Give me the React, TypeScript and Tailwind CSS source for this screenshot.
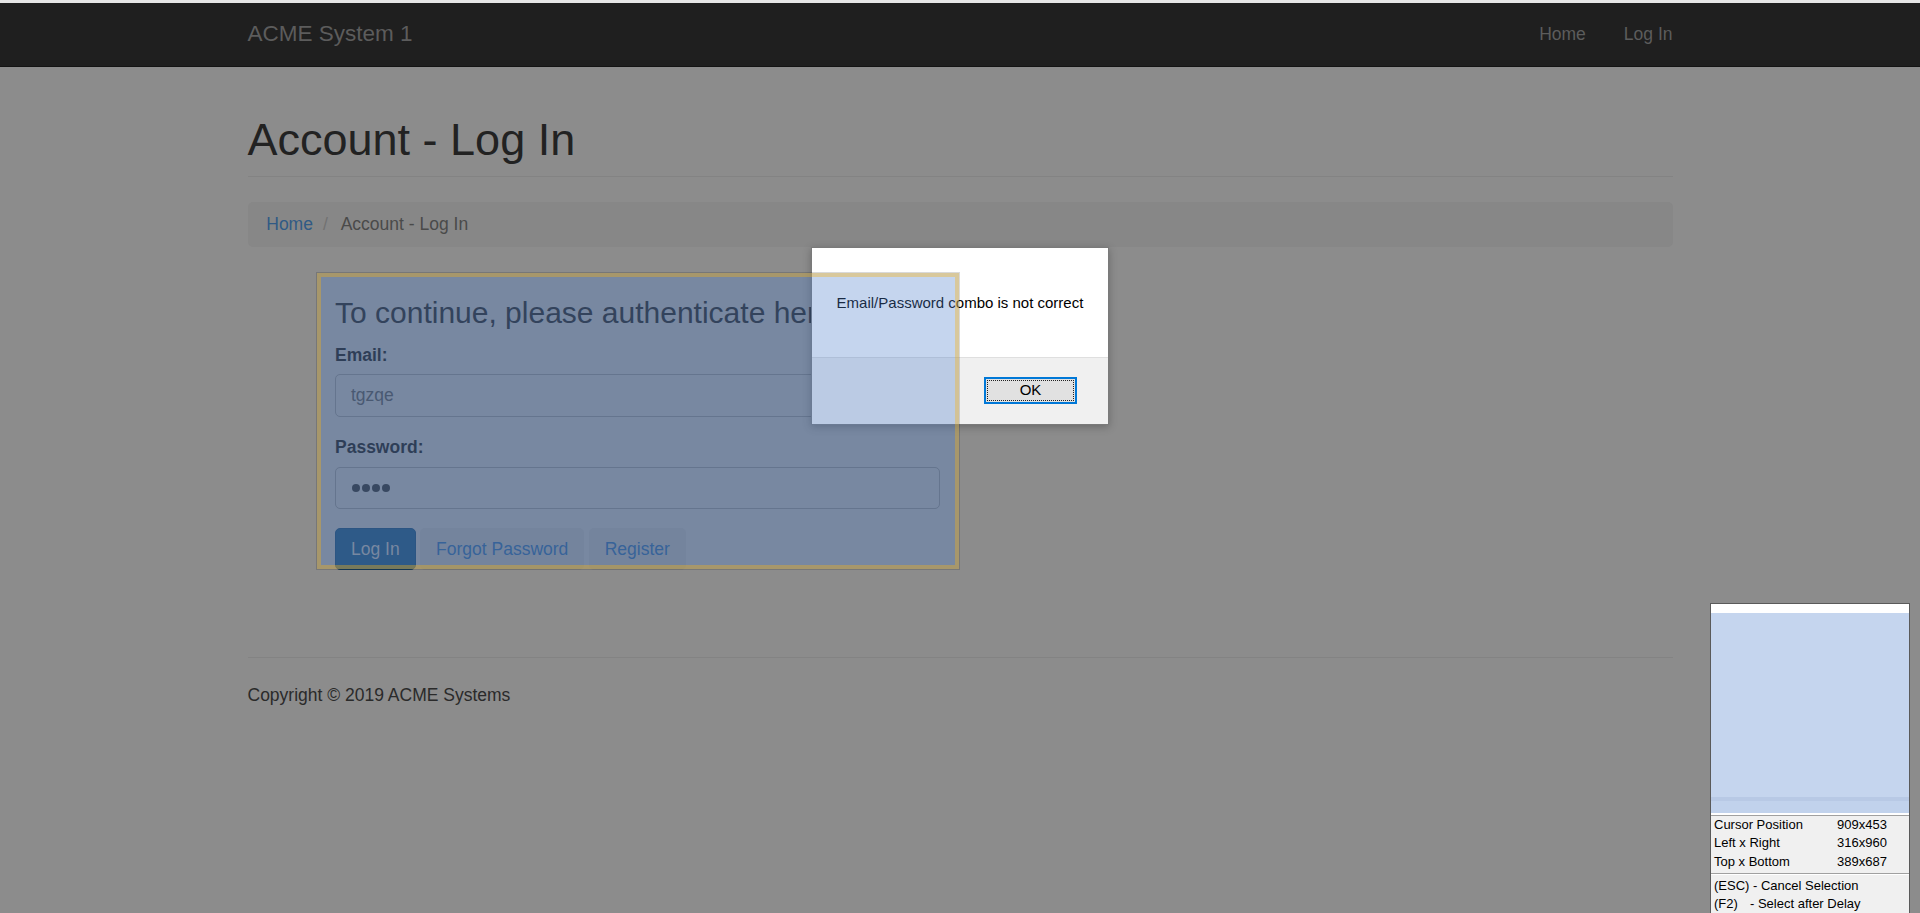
import React from "react";

export default function App() {
  return (
    <div className="relative w-[1920px] h-[913px] overflow-hidden bg-[#8c8c8c] font-['Liberation_Sans',Arial,sans-serif]">
      <div className="h-[3px] bg-[#e6e6e6]" />
      <nav className="h-[64px] bg-[#1f1f1f] border-b border-[#141414]">
        <div className="mx-auto w-[1425px] h-full flex items-center justify-between">
          <span className="text-[22.5px] leading-none text-[#5c5c5c]">ACME System 1</span>
          <div className="flex gap-[38px] text-[17.5px] leading-none text-[#5c5c5c]">
            <span>Home</span>
            <span>Log In</span>
          </div>
        </div>
      </nav>

      <div className="mx-auto w-[1425px]">
        <div className="mt-[47.7px] pb-[11.8px] border-b border-[#838383]">
          <h1 className="text-[45px] leading-[49.5px] text-[#222222]">Account - Log In</h1>
        </div>

        <div className="mt-[25px] h-[45px] rounded-[5px] bg-[#878787] px-[18.75px] flex items-center text-[17.5px] leading-[25px]">
          <span className="text-[#305a85]">Home</span>
          <span className="pl-[10px] pr-[8px] text-[#727272]">/{"\u00a0"}</span>
          <span className="text-[#4a4a4a]">Account - Log In</span>
        </div>

        <div className="mt-[49.5px] ml-[87.5px] w-[605px]">
          <h3 className="text-[30px] leading-[33px] text-[#262626] whitespace-nowrap">
            To continue, please authenticate here
          </h3>
          <div className="mt-[13.5px] text-[17.5px] leading-[25px] font-bold text-[#1e1e1e]">Email:</div>
          <div className="mt-[6.25px] h-[42.5px] rounded-[5px] border border-[#707070] bg-[#8c8c8c] px-[15px] flex items-center text-[17.5px] text-[#474747]">
            tgzqe
          </div>
          <div className="mt-[18.75px] text-[17.5px] leading-[25px] font-bold text-[#1e1e1e]">Password:</div>
          <div className="mt-[6.25px] h-[42.5px] rounded-[5px] border border-[#707070] bg-[#8c8c8c] pl-[16px] flex items-center gap-[2.5px]">
            <span className="w-[7.5px] h-[7.5px] rounded-full bg-[#2e2e2e]" />
            <span className="w-[7.5px] h-[7.5px] rounded-full bg-[#2e2e2e]" />
            <span className="w-[7.5px] h-[7.5px] rounded-full bg-[#2e2e2e]" />
            <span className="w-[7.5px] h-[7.5px] rounded-full bg-[#2e2e2e]" />
          </div>
          <div className="mt-[18.75px] flex gap-[4.4px] text-[17.5px]">
            <div className="h-[42.5px] px-[15px] rounded-[5px] border border-[#1b4060] bg-[#1e4868] text-[#8c8c8c] flex items-center">
              Log In
            </div>
            <div className="h-[42.5px] px-[15px] rounded-[5px] border border-transparent bg-[#878787] text-[#2c5580] flex items-center">
              Forgot Password
            </div>
            <div className="h-[42.5px] px-[15px] rounded-[5px] border border-transparent bg-[#878787] text-[#2c5580] flex items-center">
              Register
            </div>
          </div>
        </div>

        <div className="mt-[86.5px] border-t border-[#838383]" />
        <p className="mt-[25px] text-[17.5px] leading-[25px] text-[#2a2a2a]">Copyright © 2019 ACME Systems</p>
      </div>

      {/* alert dialog */}
      <div className="absolute left-[811px] top-[247px] w-[298px] h-[178px] bg-white border border-[#7a7a7a] shadow-[0_2px_8px_rgba(0,0,0,0.25)] flex flex-col">
        <div className="h-[109px] pt-[2px] flex items-center justify-center text-[15px] text-black whitespace-nowrap">
          Email/Password combo is not correct
        </div>
        <div className="flex-1 bg-[#f0f0f0] border-t border-[#dfdfdf] flex items-center justify-end pr-[31px] pb-[1px]">
          <div className="relative w-[93px] h-[27px] border-2 border-[#0078d7] bg-[#e1e1e1] flex items-center justify-center text-[15px] text-black">
            <div className="absolute inset-[1px] border border-dotted border-[#222]" />
            OK
          </div>
        </div>
      </div>

      {/* selection overlay */}
      <div className="absolute left-[316px] top-[272px] w-[644px] h-[298px] border border-[rgba(0,0,0,0.15)]">
        <div className="w-full h-full border-4 border-[rgba(249,178,14,0.365)] bg-[rgba(79,128,204,0.33)]" />
      </div>

      {/* capture tool magnifier panel */}
      <div className="absolute left-[1710px] top-[603px] w-[200px] h-[320px] border border-[#5a5a5a] bg-[#f0f0f0] flex flex-col text-[13px] text-black">
        <div className="h-[9px] bg-white" />
        <div className="h-[184px] bg-[#c5d5ee]" />
        <div className="h-[4px] bg-[#b8c9e5]" />
        <div className="h-[12px] bg-[#c1d2ec]" />
        <div className="h-[2px] bg-white" />
        <div className="h-[1px] bg-[#a0a0a0]" />
        <div className="pl-[3px] leading-[18.33px]">
          <div className="grid grid-cols-[123px_1fr]">
            <span>Cursor Position</span>
            <span>909x453</span>
          </div>
          <div className="grid grid-cols-[123px_1fr]">
            <span>Left x Right</span>
            <span>316x960</span>
          </div>
          <div className="grid grid-cols-[123px_1fr]">
            <span>Top x Bottom</span>
            <span>389x687</span>
          </div>
        </div>
        <div className="mt-[2px] h-[1px] bg-[#a0a0a0]" />
        <div className="h-[1px] bg-white" />
        <div className="mt-[2px] pl-[3px] leading-[18px]">
          <div>(ESC) - Cancel Selection</div>
          <div>
            <span className="inline-block w-[36px]">(F2)</span>- Select after Delay
          </div>
        </div>
      </div>
    </div>
  );
}
